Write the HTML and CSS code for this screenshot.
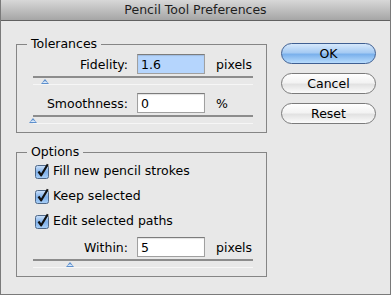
FILE: index.html
```html
<!DOCTYPE html>
<html lang="en">
<head>
    <meta charset="UTF-8">
    <title>Pencil Tool Preferences</title>
    <link rel="stylesheet" href="styles.css">
</head>
<body>
    <div class="window">
        <div class="titlebar">Pencil Tool Preferences</div>

        <div class="content">
            <div class="panels">
                <div class="group">
                    <div class="group-title">Tolerances</div>

                    <div class="field first">
                        <span class="field-label">Fidelity:</span>
                        <span class="input selected">1.6</span>
                        <span class="unit">pixels</span>
                    </div>
                    <div class="slider"><span class="thumb" style="margin-left: 8px"></span></div>

                    <div class="field">
                        <span class="field-label">Smoothness:</span>
                        <span class="input">0</span>
                        <span class="unit">%</span>
                    </div>
                    <div class="slider"><span class="thumb" style="margin-left: -4px"></span></div>
                </div>

                <div class="group options">
                    <div class="group-title">Options</div>

                    <div class="check-row first">
                        <svg class="checkbox" width="16" height="16" viewBox="0 0 16 16"><use href="#check"/></svg>
                        <span>Fill new pencil strokes</span>
                    </div>
                    <div class="check-row">
                        <svg class="checkbox" width="16" height="16" viewBox="0 0 16 16"><use href="#check"/></svg>
                        <span>Keep selected</span>
                    </div>
                    <div class="check-row">
                        <svg class="checkbox" width="16" height="16" viewBox="0 0 16 16"><use href="#check"/></svg>
                        <span>Edit selected paths</span>
                    </div>

                    <div class="field within">
                        <span class="field-label">Within:</span>
                        <span class="input">5</span>
                        <span class="unit">pixels</span>
                    </div>
                    <div class="slider"><span class="thumb" style="margin-left: 33px"></span></div>
                </div>
            </div>

            <div class="buttons">
                <button class="btn default">OK</button>
                <button class="btn">Cancel</button>
                <button class="btn">Reset</button>
            </div>
        </div>
    </div>

    <!-- shared checkbox graphic -->
    <svg width="0" height="0" class="defs">
        <defs>
            <linearGradient id="boxfill" x1="0" y1="0" x2="0" y2="1">
                <stop offset="0" stop-color="#cfe3fa"/>
                <stop offset="0.5" stop-color="#7fb0ea"/>
                <stop offset="1" stop-color="#a9d0f8"/>
            </linearGradient>
            <g id="check">
                <rect x="1.5" y="2.5" width="13" height="13" rx="2" fill="url(#boxfill)" stroke="#4f6888"/>
                <path d="M4.5 8.5 L7.2 12.3 L13.8 1.2" fill="none" stroke="#111" stroke-width="2.2" stroke-linejoin="round"/>
            </g>
        </defs>
    </svg>
</body>
</html>
```

FILE: styles.css
```css
body {
    margin: 0;
    font-family: "DejaVu Sans", sans-serif;
    font-size: 12.5px;
    color: #000;
}
.window {
    width: 391px;
    height: 295px;
    box-sizing: border-box;
    background: #e8e8e8;
    border: 1px solid #7a7a7a;
    border-top: none;
    overflow: hidden;
}
.titlebar {
    height: 20px;
    line-height: 20px;
    text-align: center;
    color: #1e1e1e;
    background: linear-gradient(#d8d8d8, #a6a6a6);
    border-bottom: 1px solid #616161;
}
.content {
    display: flex;
    align-items: flex-start;
    padding: 23px 0 0 15px;
}
.panels {
    width: 251px;
}
.group {
    border: 1px solid #858585;
    padding: 0 13px 9px 16px;
}
.group.options {
    margin-top: 19px;
}
.group-title {
    width: fit-content;
    margin: -8px 0 0 -6px;
    padding: 0 4px;
    line-height: 14px;
    background: #e8e8e8;
}
.field {
    display: flex;
    align-items: center;
    height: 20px;
    margin-top: 9px;
}
.field.first {
    margin-top: 3px;
}
.field.within {
    margin-top: 4px;
}
.field-label {
    width: 95px;
    text-align: right;
}
.input {
    box-sizing: border-box;
    width: 68px;
    height: 20px;
    margin-left: 9px;
    padding-left: 3px;
    line-height: 19px;
    background: #fff;
    border: 1px solid #a0a0a0;
    border-top-color: #7c7c7c;
    box-shadow: inset 0 1px 1px rgba(0,0,0,0.12);
}
.input.selected {
    background: #b5d5fd;
}
.unit {
    margin-left: 11px;
}
.slider {
    width: 220px;
    margin-top: 2px;
    border-top: 2px solid #8c8c8c;
    box-shadow: 0 1px 0 #f6f6f6;
    padding-top: 1px;
    height: 5px;
}
.thumb {
    display: block;
    width: 0;
    height: 0;
    border-left: 4.5px solid transparent;
    border-right: 4.5px solid transparent;
    border-bottom: 5px solid #5d8fcc;
    position: relative;
}
.thumb::after {
    content: "";
    position: absolute;
    left: -3px;
    top: 2px;
    border-left: 3px solid transparent;
    border-right: 3px solid transparent;
    border-bottom: 2.5px solid #d9e9fb;
}
.check-row {
    display: flex;
    align-items: center;
    height: 25px;
}
.check-row.first {
    margin-top: -1px;
}
.checkbox {
    margin: 0 3px 0 1px;
    flex: none;
}
.defs {
    position: absolute;
}
.buttons {
    display: flex;
    flex-direction: column;
    gap: 9px;
    margin: -1px 0 0 14px;
}
.btn {
    width: 95px;
    height: 21px;
    padding: 0;
    font-family: "DejaVu Sans", sans-serif;
    font-size: 12.5px;
    color: #000;
    border-radius: 11px;
    border: 1px solid #7b7b7b;
    background: linear-gradient(#ffffff 0%, #f3f3f3 45%, #e2e2e2 55%, #fbfbfb 100%);
}
.btn.default {
    border-color: #3f5f92;
    background: linear-gradient(#d6e8fb 0%, #a6cbf3 45%, #7bb1ec 55%, #b8dcfd 100%);
}
```
